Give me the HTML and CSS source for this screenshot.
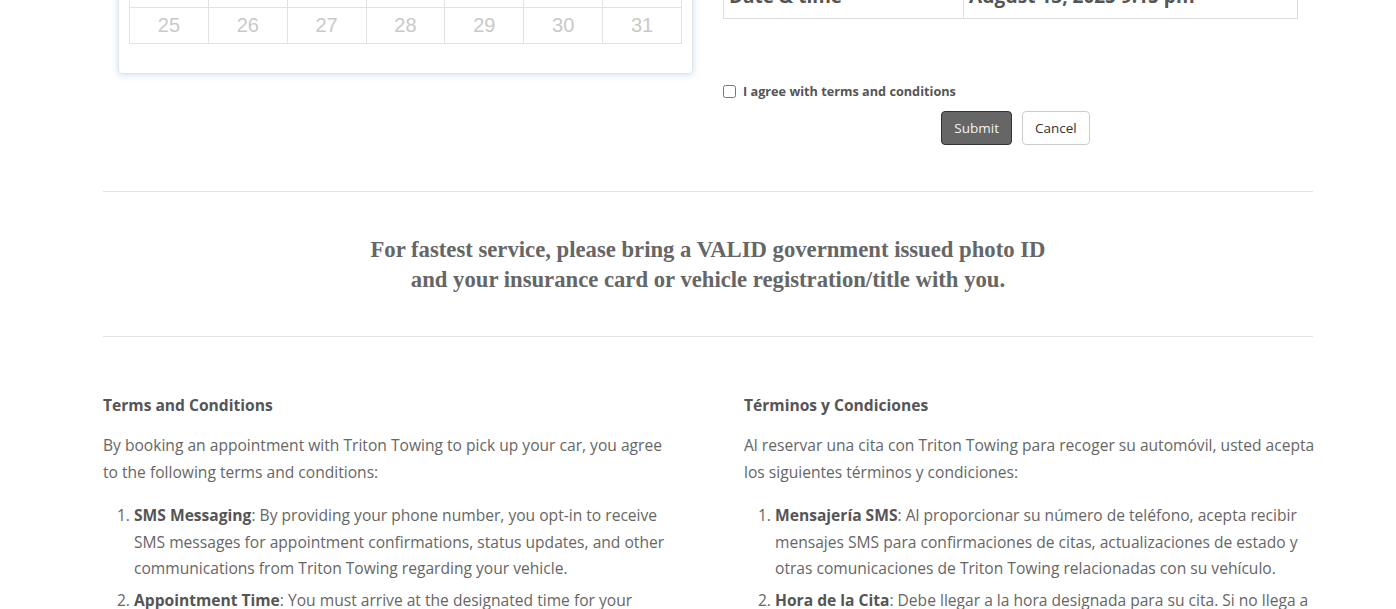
FILE: index.html
```html
<!DOCTYPE html>
<html lang="en">
<head>
    <meta charset="UTF-8">
    <meta name="viewport" content="width=device-width, initial-scale=1.0">
    <title>Book a pickup - Triton Towing</title>
    <link rel="stylesheet" href="styles.css">
</head>
<body>

    <div class="page">

        <section class="booking">
            <div class="calendar-col">
                <div class="calendar-card">
                    <table class="calendar">
                        <tr><td>18</td><td>19</td><td>20</td><td>21</td><td>22</td><td>23</td><td>24</td></tr>
                        <tr><td>25</td><td>26</td><td>27</td><td>28</td><td>29</td><td>30</td><td>31</td></tr>
                    </table>
                </div>
            </div>
            <div class="summary-col">
                <table class="summary">
                    <tr><th>Date &amp; time</th><td>August 13, 2025 9:15 pm</td></tr>
                </table>
                <label class="agree"><input type="checkbox"> I agree with terms and conditions</label>
                <div class="actions">
                    <button class="btn btn-dark" type="submit">Submit</button>
                    <button class="btn" type="button">Cancel</button>
                </div>
            </div>
        </section>

        <hr class="divider">

        <h3 class="notice">For fastest service, please bring a VALID government issued photo ID<br>and your insurance card or vehicle registration/title with you.</h3>

        <hr class="divider">

        <section class="terms">
            <div class="terms-col">
                <h4>Terms and Conditions</h4>
                <p>By booking an appointment with Triton Towing to pick up your car, you agree to the following terms and conditions:</p>
                <ol>
                    <li><strong>SMS Messaging</strong>: By providing your phone number, you opt-in to receive SMS messages for appointment confirmations, status updates, and other communications from Triton Towing regarding your vehicle.</li>
                    <li><strong>Appointment Time</strong>: You must arrive at the designated time for your appointment. If you do not arrive within the scheduled window, your appointment may be cancelled.</li>
                    <li><strong>Identification</strong>: A valid government issued photo ID is required to release the vehicle.</li>
                </ol>
            </div>
            <div class="terms-col">
                <h4>Términos y Condiciones</h4>
                <p>Al reservar una cita con Triton Towing para recoger su automóvil, usted acepta los siguientes términos y condiciones:</p>
                <ol>
                    <li><strong>Mensajería SMS</strong>: Al proporcionar su número de teléfono, acepta recibir mensajes SMS para confirmaciones de citas, actualizaciones de estado y otras comunicaciones de Triton Towing relacionadas con su vehículo.</li>
                    <li><strong>Hora de la Cita</strong>: Debe llegar a la hora designada para su cita. Si no llega a tiempo, su cita puede ser cancelada.</li>
                    <li><strong>Identificación</strong>: Se requiere una identificación con foto válida emitida por el gobierno para liberar el vehículo.</li>
                </ol>
            </div>
        </section>

    </div>

</body>
</html>
```

FILE: styles.css
```css
/* Page base */
body {
    margin: 0;
    font-family: "Open Sans", "Liberation Sans", sans-serif;
    font-size: 15.6px;
    color: #666;
    background: #fff;
}
.page {
    width: 1210px;
    margin-left: 103px;
}

/* Booking area (calendar + summary), scrolled partly out of view */
.booking {
    display: grid;
    grid-template-columns: 620px 575px;
    margin-top: -41px;
}
.calendar-col {
    padding-left: 15px;
}
.calendar-card {
    width: 575px;
    box-sizing: border-box;
    padding: 11px 10px 29px 10px;
    border: 1px solid #e2e6ea;
    border-radius: 4px;
    box-shadow: 0 1px 7px rgba(80, 150, 220, 0.3);
}
.calendar {
    width: 553px;
    border-collapse: collapse;
    table-layout: fixed;
}
.calendar td {
    height: 35px;
    padding: 0;
    border: 1px solid #e2e2e2;
    text-align: center;
    font-family: "Liberation Sans", Arial, sans-serif;
    font-size: 20px;
    color: #c9c9c9;
}

/* Summary table */
.summary-col {
    padding-top: 14px;
}
.summary {
    width: 575px;
    border-collapse: collapse;
}
.summary th,
.summary td {
    border: 1px solid #ddd;
    padding: 8px 5px;
    text-align: left;
    font-size: 19px;
    line-height: 28px;
    font-weight: 700;
    color: #555;
}
.summary th {
    width: 229px;
}
.agree {
    display: flex;
    align-items: center;
    margin-top: 62px;
    height: 20px;
    font-size: 12.7px;
    font-weight: 700;
    color: #555;
}
.agree input {
    margin: 0 7px 0 0;
    width: 13px;
    height: 13px;
}
.actions {
    display: flex;
    justify-content: center;
    gap: 10px;
    margin-top: 10px;
    padding-left: 10px;
}
.btn {
    height: 34px;
    padding: 0 12px;
    border: 1px solid #ccc;
    border-radius: 4px;
    background: #fff;
    color: #333;
    font-family: "Open Sans", sans-serif;
    font-size: 13.5px;
}
.btn-dark {
    background: #666;
    border-color: #333;
    color: #f2f2f2;
}

/* Dividers and notice */
.divider {
    border: 0;
    border-top: 1px solid #e4e4e4;
    margin: 46px 0 0;
}
.notice {
    margin: 43px 0 41px;
    text-align: center;
    font-family: "Liberation Serif", "Times New Roman", serif;
    font-size: 22.7px;
    line-height: 30px;
    font-weight: 700;
    color: #666;
}
.notice + .divider {
    margin-top: 0;
}

/* Terms columns */
.terms {
    display: grid;
    grid-template-columns: 569px 575px;
    column-gap: 72px;
    margin-top: 55px;
}
.terms h4 {
    margin: 0;
    font-size: 15.6px;
    line-height: 26px;
    color: #555;
}
.terms p {
    margin: 14px 0 0;
    line-height: 27px;
}
.terms ol {
    margin: 16px 0 0;
    padding-left: 31px;
}
.terms li {
    line-height: 26.5px;
    margin-bottom: 5px;
}
.terms strong {
    color: #555;
}
```
